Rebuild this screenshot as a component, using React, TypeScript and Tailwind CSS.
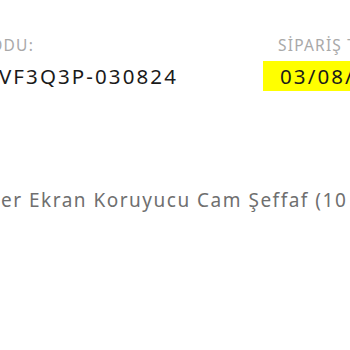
import React from 'react';

// Order detail fragment (cropped view)
export default function App() {
    return (
        <div className="w-[350px] h-[350px] overflow-hidden bg-white font-['Noto_Sans',sans-serif]">
            <div className="flex pt-[34px]">
                {/* Order code: right edge pinned, start runs off the left */}
                <div className="flex flex-col w-[263px] shrink-0">
                    <div className="flex justify-end w-[34px]">
                        <span className="whitespace-nowrap text-[15.5px] leading-[22px] tracking-[1.2px] text-[#a9a9a9]">SİPARİŞ KODU:</span>
                    </div>
                    <div className="flex justify-end w-[178px] mt-[5px]">
                        <span className="whitespace-nowrap py-[2px] text-[20.5px] leading-[26px] tracking-[2.1px] text-[#1a1a1a]">W6VF3Q3P-030824</span>
                    </div>
                </div>

                {/* Order date */}
                <div className="flex flex-col shrink-0">
                    <span className="pl-[15px] whitespace-nowrap text-[15.5px] leading-[22px] tracking-[1.2px] text-[#a9a9a9]">SİPARİŞ TARİHİ:</span>
                    <span className="mt-[5px] w-fit whitespace-nowrap bg-[#ffff00] pl-[17px] pr-[4px] py-[2px] text-[20.5px] leading-[26px] tracking-[2.1px] text-[#1a1a1a]">03/08/2024</span>
                </div>
            </div>

            {/* Product line */}
            <div className="flex mt-[97px] pl-[1px] whitespace-nowrap text-[19px] leading-[25px] tracking-[1.5px] text-[#6f6f6f]">
                <div className="flex justify-end w-0">
                    <span>iPhone Hayalet Privacy Süp</span>
                </div>
                <span>er Ekran Koruyucu Cam Şeffaf (10 Adet)</span>
            </div>
        </div>
    );
}
